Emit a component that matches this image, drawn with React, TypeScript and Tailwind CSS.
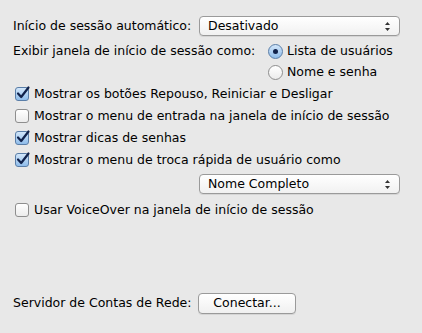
import React from 'react';

// Painel de opções de início de sessão (estilo preferências do macOS)

function Popup({ label, className = '' }: { label: string; className?: string }) {
  return (
    <div
      className={`flex h-[20px] w-[201px] items-center justify-between rounded-[4px] border border-[#9a9a9a] bg-gradient-to-b from-white to-[#f1f1f1] pl-[8px] pr-[8px] shadow-[0_1px_0_rgba(0,0,0,0.08)] ${className}`}
    >
      <span>{label}</span>
      <svg width="7" height="11" viewBox="0 0 7 11" className="shrink-0">
        <path d="M3.5 1 L6 4 L1 4 Z" fill="#333" />
        <path d="M3.5 10 L6 7 L1 7 Z" fill="#333" />
      </svg>
    </div>
  );
}

function Checkbox({ checked }: { checked: boolean }) {
  return (
    <div
      className={`relative h-[14px] w-[14px] shrink-0 rounded-[3px] border ${
        checked
          ? 'border-[#5a7ea8] bg-gradient-to-b from-[#d2e6fa] to-[#8fbcea]'
          : 'border-[#8e8e8e] bg-gradient-to-b from-white to-[#ececec]'
      }`}
    >
      {checked && (
        <svg width="16" height="16" viewBox="0 0 16 16" className="absolute left-[-1px] top-[-3px]">
          <path d="M3 8.5 L6.2 12 L13.5 2.5" fill="none" stroke="#10214a" strokeWidth="2.2" strokeLinecap="round" strokeLinejoin="round" />
        </svg>
      )}
    </div>
  );
}

function Radio({ selected }: { selected: boolean }) {
  return (
    <div
      className={`flex h-[15px] w-[15px] shrink-0 items-center justify-center rounded-full border ${
        selected
          ? 'border-[#5a7ea8] bg-gradient-to-b from-[#d2e6fa] to-[#8fbcea]'
          : 'border-[#8e8e8e] bg-gradient-to-b from-white to-[#ececec]'
      }`}
    >
      {selected && <div className="h-[5px] w-[5px] rounded-full bg-[#10214a]" />}
    </div>
  );
}

function CheckRow({ checked, label }: { checked: boolean; label: string }) {
  return (
    <div className="flex h-[22px] items-center gap-[5px] pl-[2px]">
      <Checkbox checked={checked} />
      <span>{label}</span>
    </div>
  );
}

export default function App() {
  return (
    <div
      className="flex h-[333px] w-[422px] flex-col overflow-hidden bg-[#e8e8e8] pl-[13px] pt-[16px] text-[12.5px] text-black"
      style={{ fontFamily: '"DejaVu Sans", "Noto Sans", sans-serif' }}
    >
      <div className="flex h-[20px] items-center">
        <span className="w-[186px] pt-[1px]">Início de sessão automático:</span>
        <Popup label="Desativado" />
      </div>

      <div className="mt-[5px] flex">
        <span className="flex h-[21px] w-[255px] items-center">Exibir janela de início de sessão como:</span>
        <div className="flex flex-col">
          <div className="flex h-[21px] items-center gap-[4px]">
            <Radio selected />
            <span>Lista de usuários</span>
          </div>
          <div className="flex h-[21px] items-center gap-[4px]">
            <Radio selected={false} />
            <span>Nome e senha</span>
          </div>
        </div>
      </div>

      <div className="flex flex-col">
        <CheckRow checked label="Mostrar os botões Repouso, Reiniciar e Desligar" />
        <CheckRow checked={false} label="Mostrar o menu de entrada na janela de início de sessão" />
        <CheckRow checked label="Mostrar dicas de senhas" />
        <CheckRow checked label="Mostrar o menu de troca rápida de usuário como" />
        <div className="flex h-[28px] items-start pl-[186px] pt-[3px]">
          <Popup label="Nome Completo" />
        </div>
        <CheckRow checked={false} label="Usar VoiceOver na janela de início de sessão" />
      </div>

      <div className="mt-[72px] flex h-[21px] items-center">
        <span className="w-[185px]">Servidor de Contas de Rede:</span>
        <button className="flex h-[21px] w-[98px] items-center justify-center rounded-[4px] border border-[#9a9a9a] bg-gradient-to-b from-white to-[#f0f0f0] shadow-[0_1px_0_rgba(0,0,0,0.08)]">
          Conectar...
        </button>
      </div>
    </div>
  );
}
